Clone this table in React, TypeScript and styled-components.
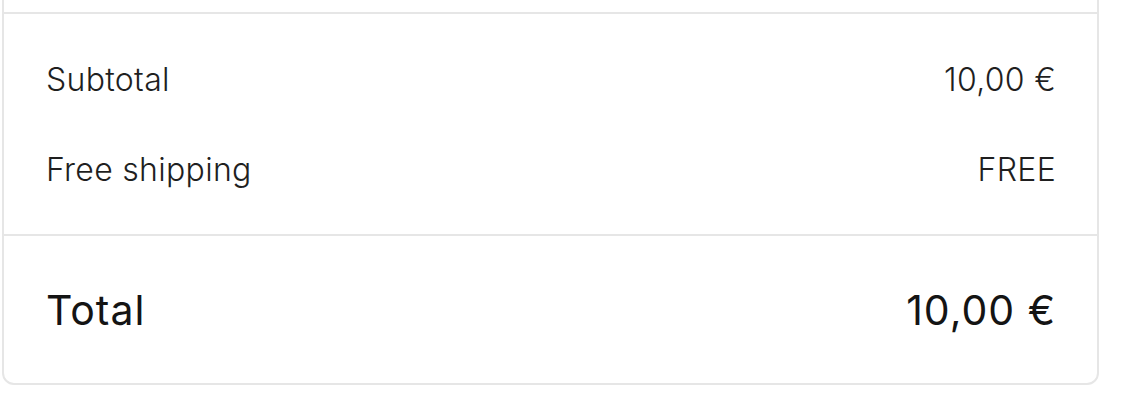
import React from "react";
import styled, { createGlobalStyle } from "styled-components";

const GlobalStyle = createGlobalStyle`
  html, body {
    margin: 0;
    padding: 0;
    background: #ffffff;
    overflow: hidden;
  }
  body {
    font-family: Inter, "Noto Sans", "Liberation Sans", sans-serif;
    color: #1a1a1a;
  }
`;

const Page = styled.div`
  display: flex;
  flex-direction: column;
  width: 1142px;
  height: 415px;
  padding-left: 2px;
  box-sizing: border-box;
  overflow: hidden;
`;

const Card = styled.div`
  width: 1097px;
  margin-top: -40px;
  border: 2px solid #e6e6e6;
  border-radius: 12px;
  box-sizing: border-box;
  background: #fff;
  overflow: hidden;
  flex: none;
`;

const Preceding = styled.div`
  height: 50px;
`;

const Section = styled.div<{ $gap?: number; $padY: number }>`
  display: flex;
  flex-direction: column;
  gap: ${(p) => p.$gap ?? 0}px;
  padding: ${(p) => p.$padY}px 42px ${(p) => p.$padY}px 42px;
  border-top: 2px solid #e6e6e6;
`;

const Row = styled.div<{ $big?: boolean }>`
  display: flex;
  justify-content: space-between;
  align-items: center;
  height: ${(p) => (p.$big ? 67 : 50)}px;
  font-size: ${(p) => (p.$big ? 41 : 32)}px;
  font-weight: ${(p) => (p.$big ? 400 : 300)};
  letter-spacing: ${(p) => (p.$big ? "1px" : "0.3px")};
  color: ${(p) => (p.$big ? "#141414" : "#1f1f1f")};
`;

const Label = styled.span``;
const Value = styled.span`
  margin-right: -1px;
`;

export default function App() {
  return (
    <>
      <GlobalStyle />
      <Page>
        <Card>
          <Preceding />
          <Section $gap={40} $padY={40}>
            <Row>
              <Label>Subtotal</Label>
              <Value>10,00 €</Value>
            </Row>
            <Row>
              <Label>Free shipping</Label>
              <Value>FREE</Value>
            </Row>
          </Section>
          <Section $padY={40}>
            <Row $big>
              <Label>Total</Label>
              <Value>10,00 €</Value>
            </Row>
          </Section>
        </Card>
      </Page>
    </>
  );
}
